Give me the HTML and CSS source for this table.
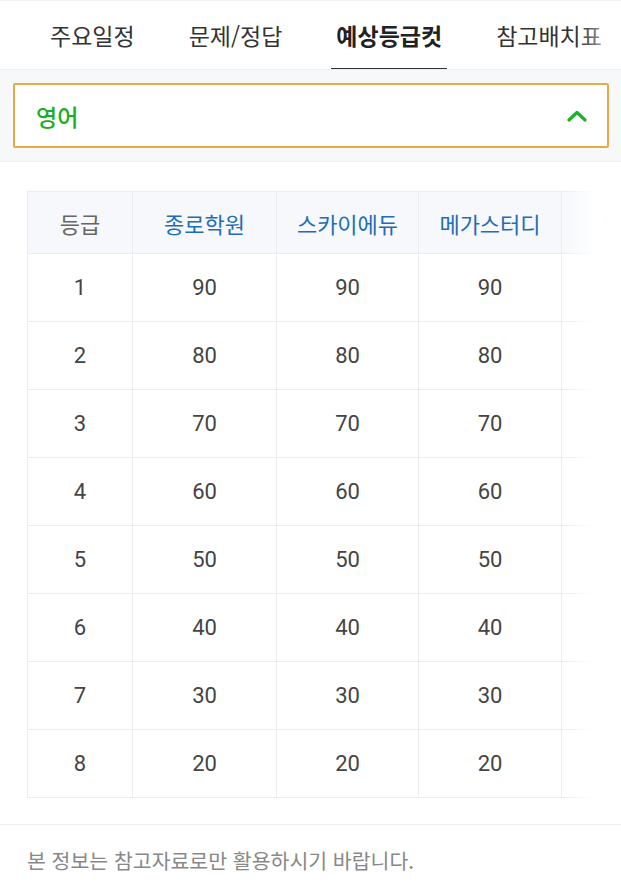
FILE: index.html
```html
<!DOCTYPE html>
<html lang="ko">
<head>
<meta charset="utf-8">
<title>예상등급컷</title>
<link rel="stylesheet" href="styles.css">
</head>
<body>
<nav class="tabs">
  <div class="tab-list">
    <a class="tab">주요일정</a>
    <a class="tab">문제/정답</a>
    <a class="tab active">예상등급컷</a>
    <a class="tab">참고배치표</a>
  </div>
  <div class="fade fade-tabs"></div>
</nav>
<section class="filter">
  <div class="select">
    <span class="select-label">영어</span>
    <svg class="chevron" width="20" height="12" viewBox="0 0 20 12"><path d="M2 10 L10 2.5 L18 10" fill="none" stroke="#19b22a" stroke-width="3.2" stroke-linecap="round" stroke-linejoin="round"/></svg>
  </div>
</section>
<section class="table-area">
  <div class="table-wrap">
    <table class="grade">
      <colgroup>
        <col class="w-grade"><col class="w-1"><col class="w-2"><col class="w-3"><col class="w-4">
      </colgroup>
      <thead>
        <tr><th class="c-grade">등급</th><th>종로학원</th><th>스카이에듀</th><th>메가스터디</th><th>이투스</th></tr>
      </thead>
      <tbody>
        <tr><td>1</td><td>90</td><td>90</td><td>90</td><td>90</td></tr>
        <tr><td>2</td><td>80</td><td>80</td><td>80</td><td>80</td></tr>
        <tr><td>3</td><td>70</td><td>70</td><td>70</td><td>70</td></tr>
        <tr><td>4</td><td>60</td><td>60</td><td>60</td><td>60</td></tr>
        <tr><td>5</td><td>50</td><td>50</td><td>50</td><td>50</td></tr>
        <tr><td>6</td><td>40</td><td>40</td><td>40</td><td>40</td></tr>
        <tr><td>7</td><td>30</td><td>30</td><td>30</td><td>30</td></tr>
        <tr><td>8</td><td>20</td><td>20</td><td>20</td><td>20</td></tr>
      </tbody>
    </table>
    <div class="fade fade-table"></div>
  </div>
</section>
<footer class="notice">본 정보는 참고자료로만 활용하시기 바랍니다.</footer>
</body>
</html>
```
FILE: styles.css
```css
* { box-sizing: border-box; }
html, body { margin: 0; padding: 0; background: #fff; }
body {
  width: 621px;
  height: 888px;
  overflow: hidden;
  font-family: Roboto, "Noto Sans CJK KR", sans-serif;
  color: #333;
}
.tabs {
  position: relative;
  height: 70px;
  border-top: 1px solid #f2f3f5;
  border-bottom: 1px solid #eceef1;
  overflow: hidden;
}
.tab-list {
  display: flex;
  gap: 44px;
  padding-left: 45px;
  height: 100%;
  white-space: nowrap;
}
.tab {
  display: flex;
  align-items: center;
  padding: 0 5px 2px;
  height: 69px;
  font-size: 23px;
  font-family: "Noto Sans CJK KR", sans-serif;
  color: #333;
}
.tab.active {
  font-weight: 700;
  color: #222;
  border-bottom: 2px solid #333;
  padding-bottom: 0;
}
.fade { position: absolute; top: 0; bottom: 0; pointer-events: none; }
.fade-tabs {
  right: 0;
  width: 42px;
  background: linear-gradient(to right, rgba(255,255,255,0), rgba(255,255,255,0.9));
}
.filter {
  background: #f7f8fa;
  padding: 13px 12px 13px 13px;
  border-bottom: 1px solid #eef0f2;
}
.select {
  height: 65px;
  background: #fff;
  border: 2px solid #e6ab45;
  border-radius: 2px;
  display: flex;
  align-items: center;
  justify-content: space-between;
  padding: 0 20px 0 21px;
}
.select-label {
  font-family: "Noto Sans CJK KR", sans-serif;
  font-size: 23px;
  font-weight: 500;
  color: #1aae26;
}
.chevron { display: block; }
.table-area {
  padding: 29px 0 26px 27px;
}
.table-wrap {
  position: relative;
  overflow: hidden;
}
.grade {
  border-collapse: collapse;
  table-layout: fixed;
  width: 677px;
}
.w-grade { width: 105px; }
.w-1 { width: 144px; }
.w-2 { width: 142px; }
.w-3 { width: 143px; }
.w-4 { width: 143px; }
.grade th, .grade td {
  border: 1px solid #e9edf1;
  text-align: center;
  padding: 0;
}
.grade th {
  height: 62px;
  background: #f6f8fb;
  font-family: "Noto Sans CJK KR", sans-serif;
  font-size: 22px;
  font-weight: 400;
  color: #1e6db8;
}
.grade th.c-grade { color: #666; }
.grade td {
  height: 68px;
  font-size: 22px;
  color: #444;
}
.fade-table {
  left: 536px;
  width: 58px;
  background: linear-gradient(to right, rgba(255,255,255,0) 0%, rgba(255,255,255,0.92) 50%, #fff 80%);
}
.notice {
  border-top: 1px solid #eceff1;
  padding: 20px 27px;
  font-family: "Noto Sans CJK KR", sans-serif;
  font-size: 20.5px;
  color: #888;
}
```
